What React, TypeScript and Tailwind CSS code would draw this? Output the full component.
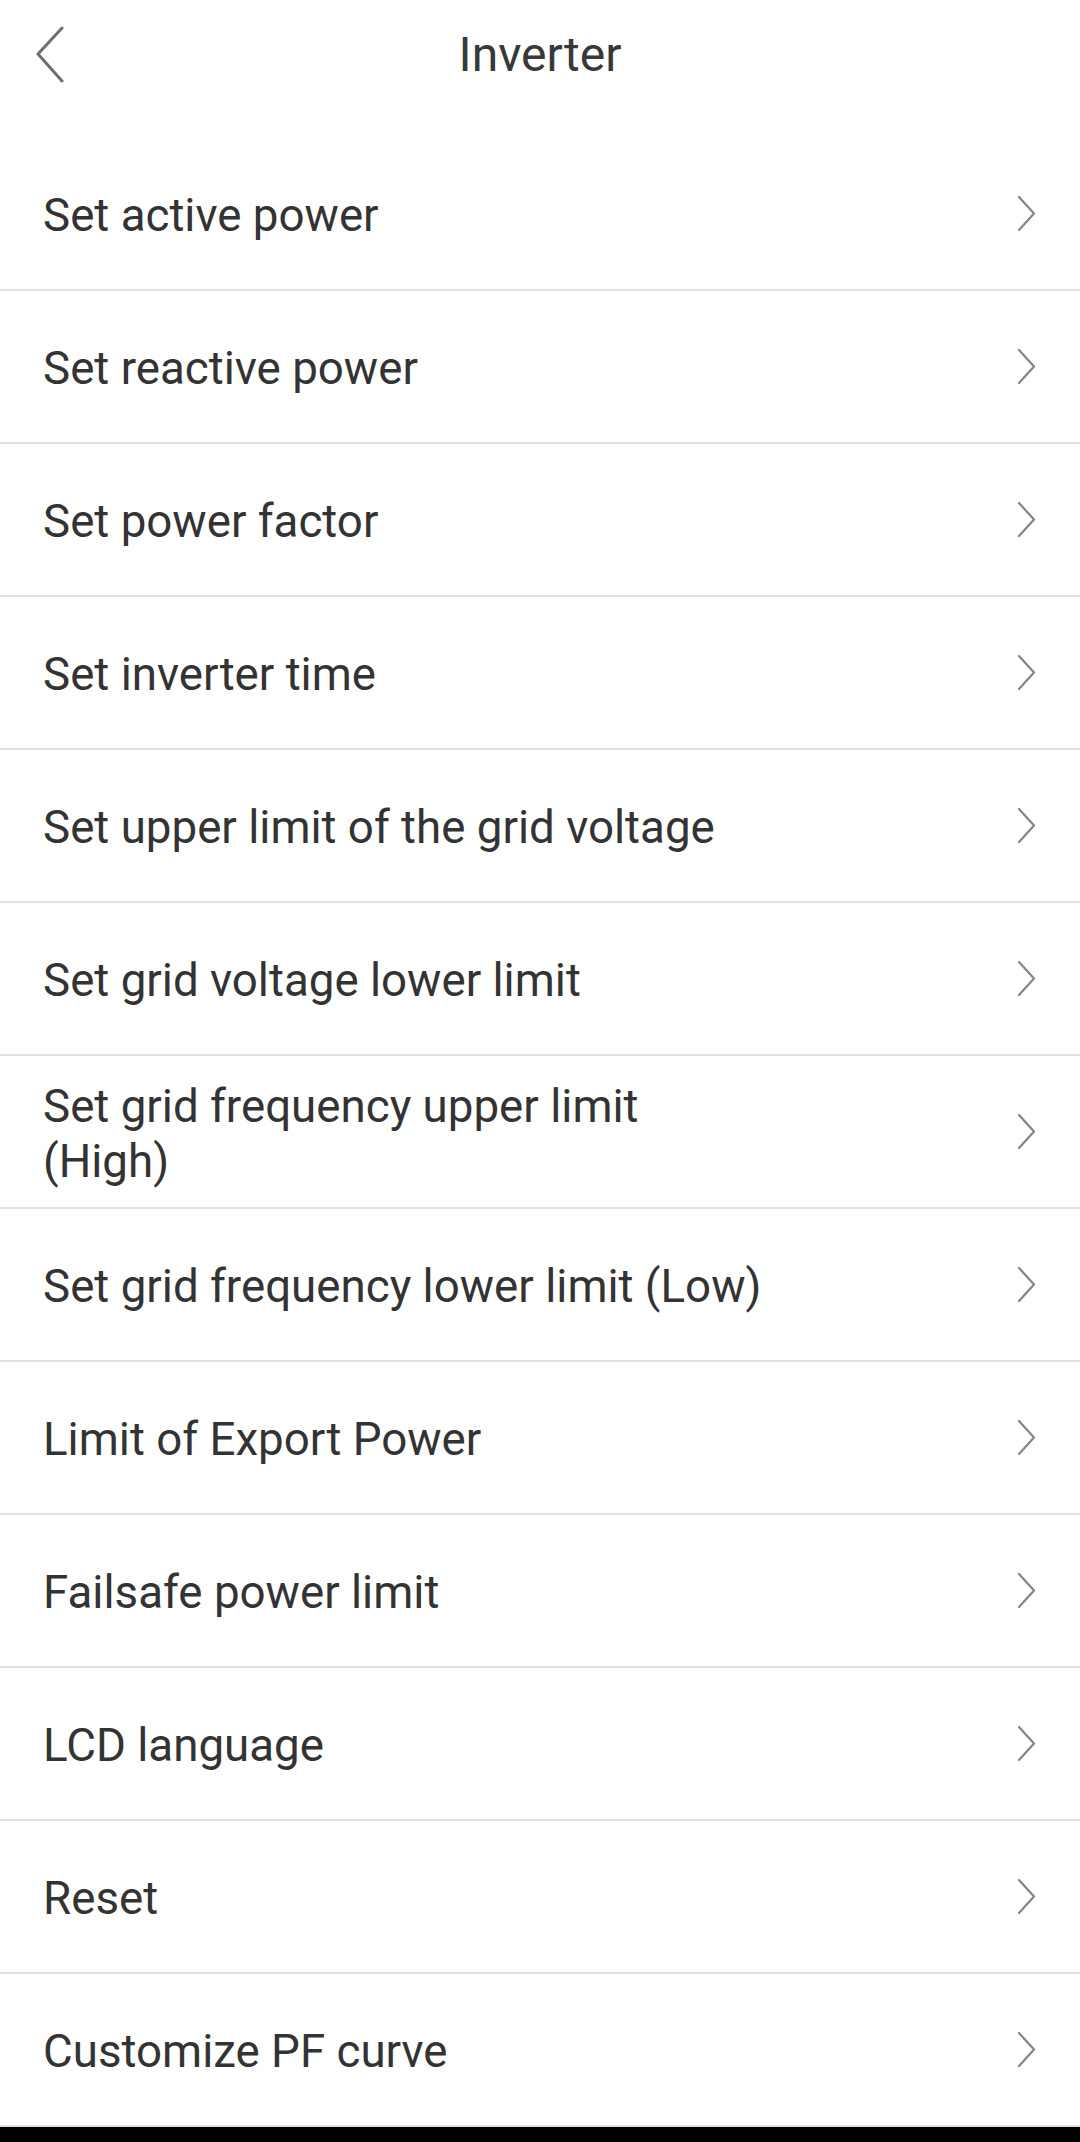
import React from "react";

const items: string[] = [
  "Set active power",
  "Set reactive power",
  "Set power factor",
  "Set inverter time",
  "Set upper limit of the grid voltage",
  "Set grid voltage lower limit",
  "Set grid frequency upper limit\n(High)",
  "Set grid frequency lower limit (Low)",
  "Limit of Export Power",
  "Failsafe power limit",
  "LCD language",
  "Reset",
  "Customize PF curve",
];

function ChevronRight() {
  return (
    <svg width="20" height="38" viewBox="0 0 20 38" fill="none" className="shrink-0">
      <path d="M2 2 L17 18.5 L2 35" stroke="#858585" strokeWidth="2.2" strokeLinecap="round" strokeLinejoin="round" />
    </svg>
  );
}

function ChevronLeft() {
  return (
    <svg width="30" height="58" viewBox="0 0 30 58" fill="none">
      <path d="M27 2 L3 28 L27 55" stroke="#6e6e6e" strokeWidth="3" strokeLinecap="round" strokeLinejoin="round" />
    </svg>
  );
}

export default function App() {
  return (
    <div
      className="w-[1080px] h-[2142px] bg-white flex flex-col text-[#333333]"
      style={{ fontFamily: "Roboto, 'Noto Sans', sans-serif" }}
    >
      <header className="h-[110px] grid grid-cols-[1fr_auto_1fr] items-center">
        <div className="pl-[35px] flex items-center">
          <ChevronLeft />
        </div>
        <h1 className="text-[48px] leading-none font-normal text-[#383838]">Inverter</h1>
        <div />
      </header>
      <ul className="mt-[28px] flex flex-col">
        {items.map((label) => (
          <li
            key={label}
            className="h-[153px] border-b-2 border-[#e2e2e2] flex items-center justify-between pl-[43px] pr-[43px]"
          >
            <span className="text-[45.7px] leading-[55px] whitespace-pre-line pt-[4px]">{label}</span>
            <ChevronRight />
          </li>
        ))}
      </ul>
      <div className="flex-1 bg-black" />
    </div>
  );
}
